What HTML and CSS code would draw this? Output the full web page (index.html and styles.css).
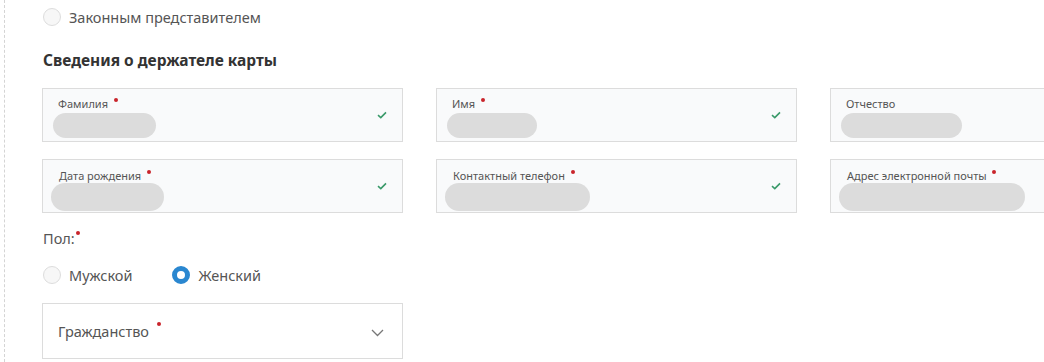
FILE: index.html
```html
<!DOCTYPE html>
<html lang="ru">
<head>
  <meta charset="UTF-8">
  <title>Сведения о держателе карты</title>
  <link rel="stylesheet" href="styles.css">
</head>
<body>
  <div class="page">
    <label class="radio"><span class="dot"></span> Законным представителем</label>

    <h3 class="title">Сведения о держателе карты</h3>

    <div class="fields">
      <div class="field">
        <div class="label">Фамилия <i class="req"></i></div>
        <div class="pill" style="width: 103px"></div>
        <svg class="check" width="10" height="8" viewBox="0 0 10 8"><path d="M1 4.2 L3.8 6.6 L9 1.4" fill="none" stroke="#3a9a6a" stroke-width="1.6"/></svg>
      </div>
      <div class="field">
        <div class="label">Имя <i class="req"></i></div>
        <div class="pill" style="width: 90px"></div>
        <svg class="check" width="10" height="8" viewBox="0 0 10 8"><path d="M1 4.2 L3.8 6.6 L9 1.4" fill="none" stroke="#3a9a6a" stroke-width="1.6"/></svg>
      </div>
      <div class="field">
        <div class="label">Отчество</div>
        <div class="pill" style="width: 121px"></div>
      </div>

      <div class="field tall">
        <div class="label">Дата рождения <i class="req"></i></div>
        <div class="pill" style="width: 113px"></div>
        <svg class="check" width="10" height="8" viewBox="0 0 10 8"><path d="M1 4.2 L3.8 6.6 L9 1.4" fill="none" stroke="#3a9a6a" stroke-width="1.6"/></svg>
      </div>
      <div class="field tall">
        <div class="label">Контактный телефон <i class="req"></i></div>
        <div class="pill" style="width: 145px"></div>
        <svg class="check" width="10" height="8" viewBox="0 0 10 8"><path d="M1 4.2 L3.8 6.6 L9 1.4" fill="none" stroke="#3a9a6a" stroke-width="1.6"/></svg>
      </div>
      <div class="field tall">
        <div class="label">Адрес электронной почты <i class="req"></i></div>
        <div class="pill" style="width: 186px"></div>
      </div>
    </div>

    <div class="gender-title">Пол:<i class="req"></i></div>
    <div class="gender">
      <label class="radio"><span class="dot"></span> Мужской</label>
      <label class="radio"><span class="dot checked"></span> Женский</label>
    </div>

    <div class="select">
      <span>Гражданство <i class="req"></i></span>
      <svg width="13" height="8" viewBox="0 0 13 8"><path d="M1 1 L6.5 6.5 L12 1" fill="none" stroke="#777" stroke-width="1.3"/></svg>
    </div>
  </div>
</body>
</html>
```

FILE: styles.css
```css
body {
  margin: 0;
  font-family: "Noto Sans", Arial, sans-serif;
  color: #555;
  overflow: hidden;
  width: 1044px;
  height: 362px;
}
.page {
  margin-left: 4px;
  border-left: 1px dashed #d4d4d4;
  padding-left: 37px;
  height: 362px;
  overflow: hidden;
}
.radio {
  display: inline-flex;
  align-items: center;
  gap: 8px;
  font-size: 14.5px;
  color: #555;
  height: 34px;
}
.dot {
  width: 16px;
  height: 16px;
  border: 1px solid #ddd;
  border-radius: 50%;
  background: #f7f7f7;
  margin-left: 1px;
}
.dot.checked {
  width: 8px;
  height: 8px;
  border: 5px solid #2a87d0;
  background: #fff;
}
.title {
  margin: 14px 0 0 1px;
  font-size: 15.5px;
  font-weight: bold;
  color: #333;
  line-height: 24px;
}
.fields {
  display: grid;
  grid-template-columns: 361px 361px 361px;
  column-gap: 33px;
  row-gap: 17px;
  margin-top: 16px;
}
.field {
  position: relative;
  height: 54px;
  border: 1px solid #dcdcdc;
  background: #f9fafb;
  box-sizing: border-box;
  padding: 7px 0 0 10px;
}
.field .label {
  font-size: 11px;
  color: #555;
  padding-left: 5px;
  line-height: 15px;
}
.pill {
  height: 25px;
  border-radius: 13px;
  background: #dcdcdc;
  margin-top: 2px;
}
.field.tall {
  padding-left: 8px;
  padding-top: 8px;
}
.field.tall .label {
  padding-left: 8px;
}
.field.tall .pill {
  height: 28px;
  border-radius: 14px;
  margin-top: 0;
}
.check {
  position: absolute;
  right: 15px;
  top: 22px;
}
.req {
  display: inline-block;
  width: 4px;
  height: 4px;
  border-radius: 50%;
  background: #c9242b;
  vertical-align: top;
  margin-top: 2px;
  margin-left: 3px;
}
.gender-title {
  margin-top: 15px;
  margin-left: 1px;
  font-size: 14.5px;
  line-height: 20px;
}
.gender-title .req {
  margin-left: 1px;
  margin-top: 3px;
}
.gender {
  display: flex;
  gap: 39px;
  margin-top: 10px;
}
.select {
  margin-top: 11px;
  width: 361px;
  height: 56px;
  box-sizing: border-box;
  border: 1px solid #dcdcdc;
  display: flex;
  align-items: center;
  justify-content: space-between;
  padding: 0 18px 0 15px;
  font-size: 14.5px;
  color: #555;
}
.select span .req {
  margin-top: 1px;
  margin-left: 4px;
}
.select svg {
  margin-top: 4px;
}
```
